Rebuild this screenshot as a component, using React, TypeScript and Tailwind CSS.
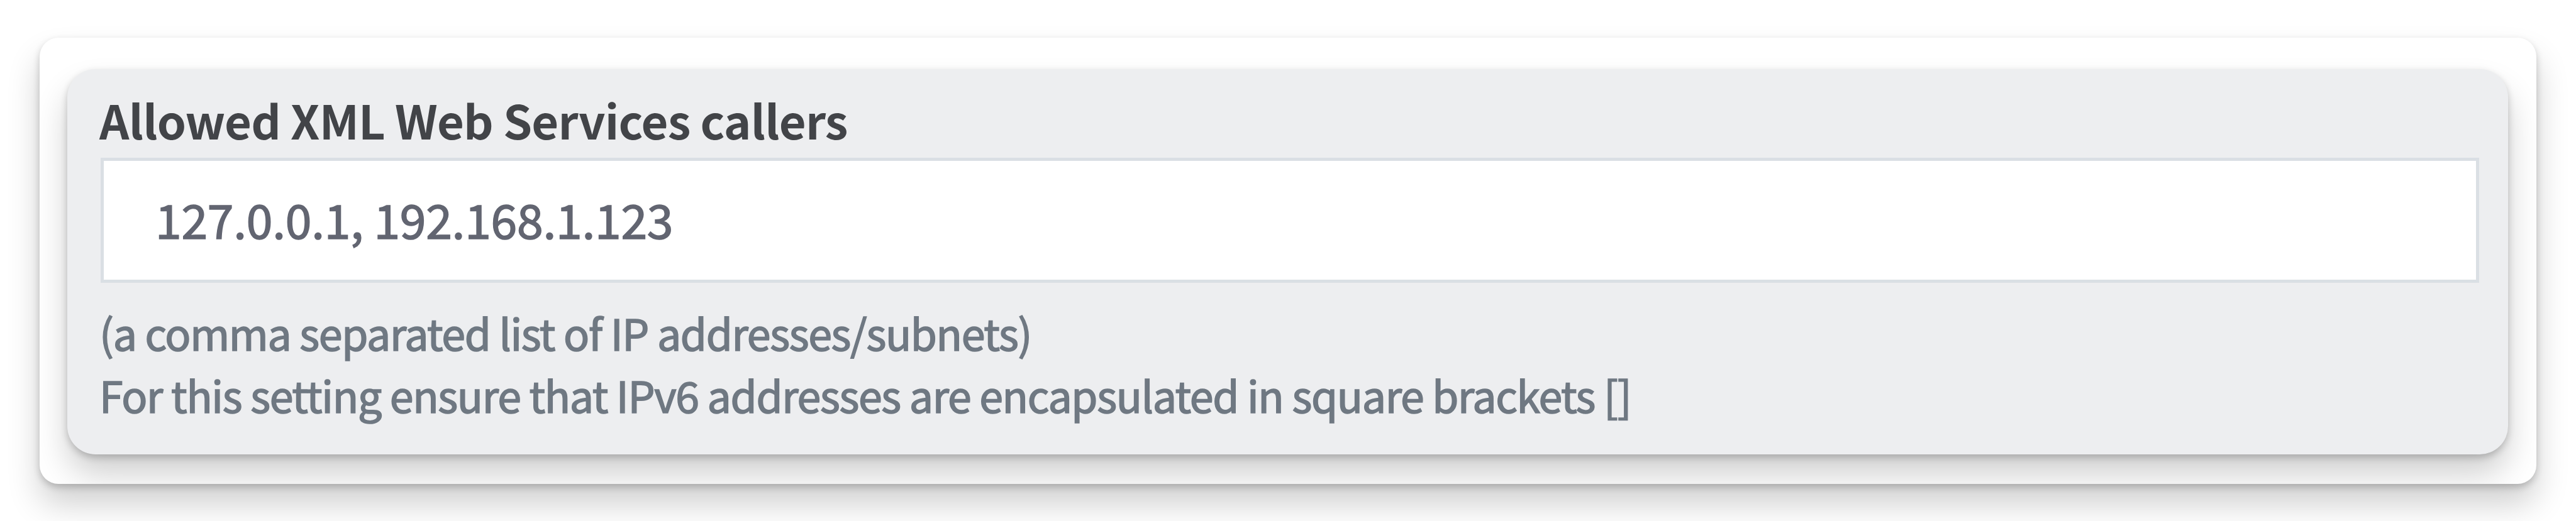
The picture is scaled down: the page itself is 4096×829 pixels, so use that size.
import { useState } from 'react';

interface SettingFieldProps {
  id: string;
  label: string;
  initialValue: string;
  hints: string[];
}

function SettingField({ id, label, initialValue, hints }: SettingFieldProps) {
  const [value, setValue] = useState(initialValue);

  return (
    <div className="h-[613px] rounded-[45px] bg-[#edeef0] pt-[27px] pr-[46px] pl-[53px] shadow-[0_5px_12px_0_rgba(0,0,0,0.2),0_32px_52px_0_rgba(0,0,0,0.19)]">
      <label
        htmlFor={id}
        className="-ml-[2px] block h-[114px] text-[74px] leading-[106px] font-bold tracking-[-0.8px] whitespace-nowrap text-[#424448]"
      >
        {label}
      </label>
      <input
        id={id}
        type="text"
        value={value}
        onChange={(e) => setValue(e.target.value)}
        className="block h-[199px] w-full border-[5px] border-[#dadfe4] bg-white px-[82px] pb-[7px] text-[75px] tracking-[-0.23px] text-[#626571] outline-none [-webkit-text-stroke:1.6px_#626571]"
      />
      <div className="-ml-[2px] pt-[29px] text-[68px] leading-[99.4px] tracking-[-1.32px] whitespace-nowrap text-[#6f7882] [-webkit-text-stroke:1.6px_#6f7882]">
        {hints.map((hint) => (
          <p key={hint}>{hint}</p>
        ))}
      </div>
    </div>
  );
}

export default function App() {
  return (
    <div className="h-[829px] w-[4096px] overflow-hidden bg-white px-[63px] pt-[60px] font-['Noto_Sans_CJK_SC',sans-serif]">
      <div className="h-[710px] overflow-hidden rounded-[30px] bg-white pt-[50px] pr-[45px] pl-[44px] shadow-[0_5px_12px_0_rgba(0,0,0,0.2),0_32px_52px_0_rgba(0,0,0,0.19)]">
        <SettingField
          id="xml-callers"
          label="Allowed XML Web Services callers"
          initialValue="127.0.0.1, 192.168.1.123"
          hints={[
            '(a comma separated list of IP addresses/subnets)',
            'For this setting ensure that IPv6 addresses are encapsulated in square brackets []',
          ]}
        />
      </div>
    </div>
  );
}
